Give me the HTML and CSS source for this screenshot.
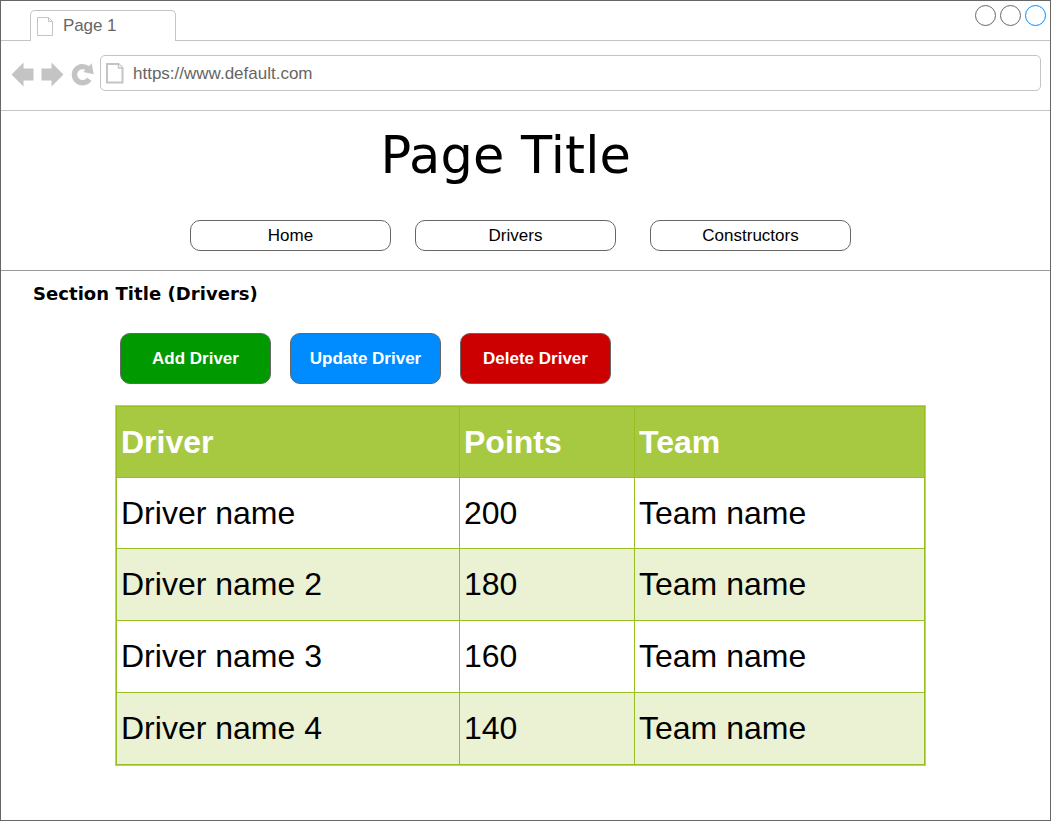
FILE: index.html
```html
<!DOCTYPE html>
<html lang="en">
<head>
<meta charset="utf-8">
<title>Page Title</title>
<link rel="stylesheet" href="styles.css">
</head>
<body>
<div class="window">
  <div class="tabbar">
    <div class="tab">
      <svg class="tab-icon" width="17" height="20" viewBox="0 0 17 20"><path d="M.5.5h11l4 4v14H.5zM11.500.500v4h4"/></svg>
      <span>Page 1</span>
    </div>
    <div class="controls"><i class="dot"></i><i class="dot"></i><i class="dot dot-active"></i></div>
  </div>
  <div class="toolbar">
    <svg class="nav-icons" width="84" height="26" viewBox="11 62 84 26">
      <path d="M11.500 74.500 23.500 62.500v6h10v12h-10v6z"/>
      <path d="M63.500 74.500 51.500 62.500v6h-10v12h10v6z"/>
      <path class="ring" d="M89.300 79.200A8.100 8.100 0 1 1 88 68.700"/>
      <path d="M91.700 63.300 93.700 74.300 83.400 72z"/>
    </svg>
    <div class="address">
      <svg class="address-icon" width="18" height="21" viewBox="0 0 18 21"><path d="M1 1h11.500l4 4v14.500H1z"/><path class="fold" d="M12.500 1v4h4"/></svg>
      <span>https://www.default.com</span>
    </div>
  </div>
  <header class="header">
    <h1 class="title">Page Title</h1>
    <nav class="nav"><a>Home</a><a>Drivers</a><a>Constructors</a></nav>
  </header>
  <main class="main">
    <h2 class="section-title">Section Title (Drivers)</h2>
    <div class="actions">
      <button class="btn add">Add Driver</button>
      <button class="btn update">Update Driver</button>
      <button class="btn delete">Delete Driver</button>
    </div>
    <table class="drivers">
      <colgroup><col class="c1"><col class="c2"><col class="c3"></colgroup>
      <tr class="head"><th>Driver</th><th>Points</th><th>Team</th></tr>
      <tr><td>Driver name</td><td>200</td><td>Team name</td></tr>
      <tr class="tall alt"><td>Driver name 2</td><td>180</td><td>Team name</td></tr>
      <tr class="tall"><td>Driver name 3</td><td>160</td><td>Team name</td></tr>
      <tr class="tall alt"><td>Driver name 4</td><td>140</td><td>Team name</td></tr>
    </table>
  </main>
</div>
</body>
</html>
```
FILE: styles.css
```css
* { box-sizing: border-box; }
body { margin: 0; background: #fff; font-family: "Liberation Sans", Arial, sans-serif; }
.window { width: 1051px; height: 821px; border: 1px solid #666; overflow: hidden; }
.tabbar { height: 40px; padding: 9px 4px 0 29px; border-bottom: 1px solid #c4c4c4; display: flex; justify-content: space-between; }
.tab { width: 146px; height: 31px; border: 1px solid #c4c4c4; border-bottom: 0; border-radius: 5px 5px 0 0; background: #fff; display: flex; padding: 5px 0 0 6px; gap: 9px; font-size: 17px; line-height: 19px; letter-spacing: -0.1px; color: #666; }
.tab-icon { margin-top: 1px; fill: #fff; stroke: #c4c4c4; }
.controls { display: flex; gap: 4px; margin-top: -5px; }
.dot { width: 21px; height: 21px; border: 1px solid #666; border-radius: 50%; }
.dot-active { border-color: #008cff; }
.toolbar { height: 70px; padding: 14px 9px 0 10px; border-bottom: 1px solid #c4c4c4; display: flex; gap: 5px; }
.nav-icons { margin-top: 7px; fill: #c4c4c4; flex: none; }
.ring { fill: none; stroke: #c4c4c4; stroke-width: 5.4; }
.address { flex: 1; height: 36px; border: 1px solid #c4c4c4; border-radius: 5px; display: flex; padding: 7px 0 0 5px; gap: 9px; font-size: 17px; line-height: 21px; color: #666; }
.address-icon { fill: #fff; stroke: #c4c4c4; stroke-width: 2; }
.address-icon .fold { stroke-width: 1.300; }
.header { height: 160px; border-bottom: 1px solid #999; }
.title { margin: 0; padding: 13px 0 0 379.5px; font: 400 51px/63px "DejaVu Sans", Verdana, sans-serif; letter-spacing: 0.15px; white-space: nowrap; }
.nav { display: flex; padding: 33px 0 0 189px; }
.nav a { width: 201px; height: 31px; border: 1px solid #666; border-radius: 10px; margin-right: 24px; text-align: center; font-size: 17px; line-height: 29px; }
.nav a + a { margin-right: 34px; }
.section-title { margin: 0; padding: 11px 0 0 32px; font: 700 18px/23px "DejaVu Sans", Verdana, sans-serif; letter-spacing: 0.05px; }
.actions { display: flex; gap: 19px; padding: 28px 0 0 119px; }
.btn { width: 151px; height: 51px; padding: 0; border: 1px solid #666; border-radius: 10px; color: #fff; font: 700 17px/1 "Liberation Sans", Arial, sans-serif; }
.add { background: #090; }
.update { background: #008cff; }
.delete { background: #c00; }
.drivers { width: 811px; table-layout: fixed; margin: 21px 0 0 114px; border: 1px solid #c0c0c0; border-spacing: 1px; background: #98bf21; background-clip: padding-box; font-size: 32px; line-height: 38px; }
.c1 { width: 342px; }
.c2 { width: 174px; }
.c3 { width: 289px; }
.drivers th, .drivers td { height: 70px; padding: 0 4px; text-align: left; background: #fff; }
.drivers .tall td { height: 71px; padding-bottom: 1px; }
.drivers .head th { background: #a7c942; color: #fff; }
.drivers .alt td { background: #eaf2d3; }
```
